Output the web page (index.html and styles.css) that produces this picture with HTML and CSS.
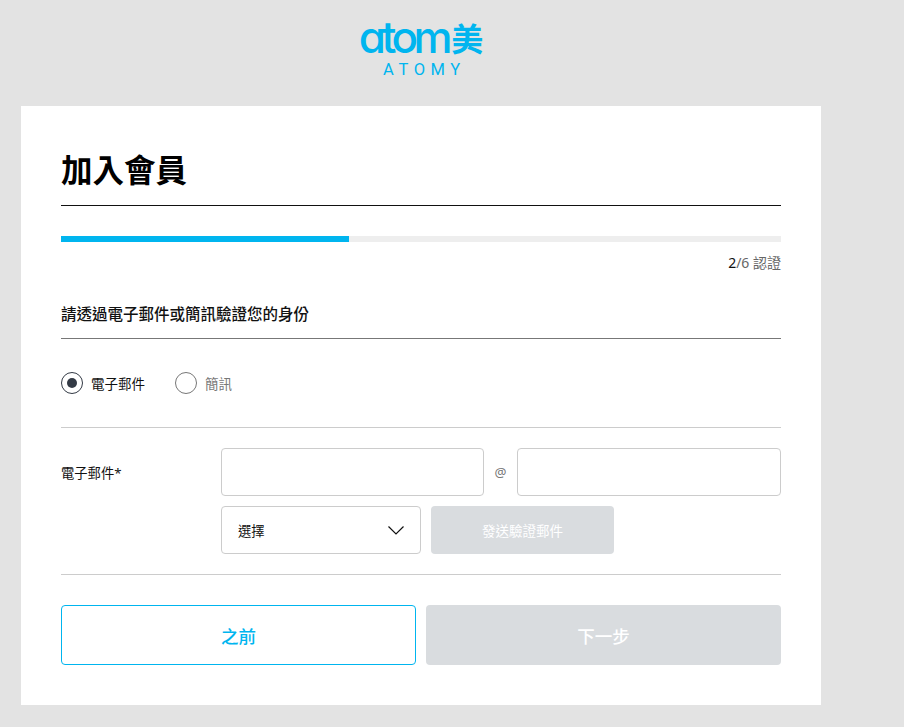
FILE: index.html
```html
<!DOCTYPE html>
<html lang="zh-Hant">
<head>
    <meta charset="UTF-8">
    <meta name="viewport" content="width=device-width, initial-scale=1.0">
    <title>加入會員 | Atomy</title>
    <link rel="stylesheet" href="styles.css">
</head>
<body>
    <div class="wrap">
        <header class="logo">
            <div class="logo-main"><span class="logo-word">atom</span><span class="logo-han">美</span></div>
            <div class="logo-sub">ATOMY</div>
        </header>

        <main class="card">
            <h1 class="title">加入會員</h1>

            <div class="progress"><div class="progress-bar"></div></div>
            <p class="step"><b>2</b>/6 認證</p>

            <h2 class="section-title">請透過電子郵件或簡訊驗證您的身份</h2>

            <div class="radios">
                <label class="radio is-on"><span class="radio-mark"></span>電子郵件</label>
                <label class="radio"><span class="radio-mark"></span>簡訊</label>
            </div>

            <div class="field">
                <div class="field-label">電子郵件*</div>
                <div class="field-body">
                    <div class="field-row">
                        <input class="input" type="text">
                        <span class="at">@</span>
                        <input class="input" type="text">
                    </div>
                    <div class="field-row">
                        <div class="select">
                            <span>選擇</span>
                            <svg class="chevron" width="16" height="9" viewBox="0 0 16 9"><path d="M.5.5L8 8 15.5.5" fill="none" stroke="#111" stroke-width="1.2"/></svg>
                        </div>
                        <button class="btn-send" type="button">發送驗證郵件</button>
                    </div>
                </div>
            </div>

            <div class="actions">
                <button class="btn btn-prev" type="button">之前</button>
                <button class="btn btn-next" type="button">下一步</button>
            </div>
        </main>
    </div>
</body>
</html>
```

FILE: styles.css
```css
* {
    margin: 0;
    padding: 0;
    box-sizing: border-box;
}

body {
    background: #e3e3e3;
    color: #111;
    font-family: "Noto Sans", "Noto Sans CJK TC", sans-serif;
    font-size: 13.3px;
}

.wrap {
    width: 800px;
    margin-left: 21px;
}

.logo {
    height: 106px;
    padding-top: 14px;
    text-align: center;
    color: #00b5ef;
}

.logo-main {
    display: flex;
    justify-content: center;
    align-items: center;
    height: 46px;
}

.logo-word {
    font-family: "Inter", sans-serif;
    font-feature-settings: "cv11";
    font-size: 44px;
    font-weight: 500;
    line-height: 46px;
    letter-spacing: -4.5px;
}

.logo-han {
    font-family: "Noto Sans CJK TC", sans-serif;
    font-size: 32px;
    line-height: 46px;
    font-weight: 700;
    margin-left: 3px;
}

.logo-sub {
    font-family: "Roboto", sans-serif;
    font-size: 16.5px;
    line-height: 18px;
    letter-spacing: 5.6px;
    padding-left: 7px;
    margin-top: 1px;
}

.card {
    background: #fff;
    height: 599px;
    padding: 40px;
}

.title {
    font-size: 31.5px;
    font-weight: 700;
    line-height: 48px;
    height: 60px;
    color: #000;
    border-bottom: 1px solid #111;
}

.progress {
    height: 6px;
    margin-top: 30px;
    background: #eee;
}

.progress-bar {
    width: 288px;
    height: 6px;
    background: #00b5ef;
}

.step {
    margin-top: 12px;
    line-height: 18px;
    text-align: right;
    font-size: 14px;
    color: #666;
}

.step b {
    font-weight: 400;
    color: #111;
}

.section-title {
    margin-top: 30px;
    height: 37px;
    font-size: 15.5px;
    font-weight: 500;
    line-height: 24px;
    border-bottom: 1px solid #777;
    color: #111;
}

.radios {
    display: flex;
    gap: 30px;
    height: 89px;
    padding-top: 32px;
    border-bottom: 1px solid #ccc;
}

.radio {
    display: flex;
    align-items: center;
    gap: 8px;
    height: 23px;
    font-size: 13.5px;
    color: #777;
}

.radio.is-on {
    color: #111;
}

.radio-mark {
    width: 22px;
    height: 22px;
    border: 1px solid #777;
    border-radius: 50%;
    display: flex;
    align-items: center;
    justify-content: center;
}

.is-on .radio-mark {
    border-color: #333a45;
}

.is-on .radio-mark::after {
    content: "";
    width: 10px;
    height: 10px;
    border-radius: 50%;
    background: #333a45;
}

.field {
    display: flex;
    padding: 20px 0;
    height: 147px;
    border-bottom: 1px solid #ccc;
}

.field-label {
    width: 160px;
    line-height: 50px;
    color: #111;
}

.field-body {
    flex: 1;
    display: flex;
    flex-direction: column;
    gap: 10px;
}

.field-row {
    display: flex;
    align-items: center;
}

.input {
    width: 263px;
    height: 48px;
    background: #fff;
    border: 1px solid #ccc;
    border-radius: 4px;
}

.input:last-child {
    width: 264px;
}

.at {
    width: 33px;
    text-align: center;
    color: #777;
}

.select {
    display: flex;
    align-items: center;
    justify-content: space-between;
    width: 200px;
    height: 48px;
    padding: 0 16px;
    border: 1px solid #ccc;
    border-radius: 4px;
    color: #111;
}

.btn-send {
    width: 183px;
    height: 48px;
    margin-left: 10px;
    background: #d9dcdf;
    border: none;
    border-radius: 4px;
    color: #fff;
    font: inherit;
    font-size: 13.5px;
}

.actions {
    display: flex;
    gap: 10px;
    margin-top: 30px;
}

.btn {
    width: 355px;
    height: 60px;
    border-radius: 4px;
    font: inherit;
    font-size: 17.5px;
    font-weight: 500;
}

.btn-prev {
    background: #fff;
    border: 1px solid #00b5ef;
    color: #00b5ef;
}

.btn-next {
    background: #d9dcdf;
    border: none;
    color: #fff;
}
```
